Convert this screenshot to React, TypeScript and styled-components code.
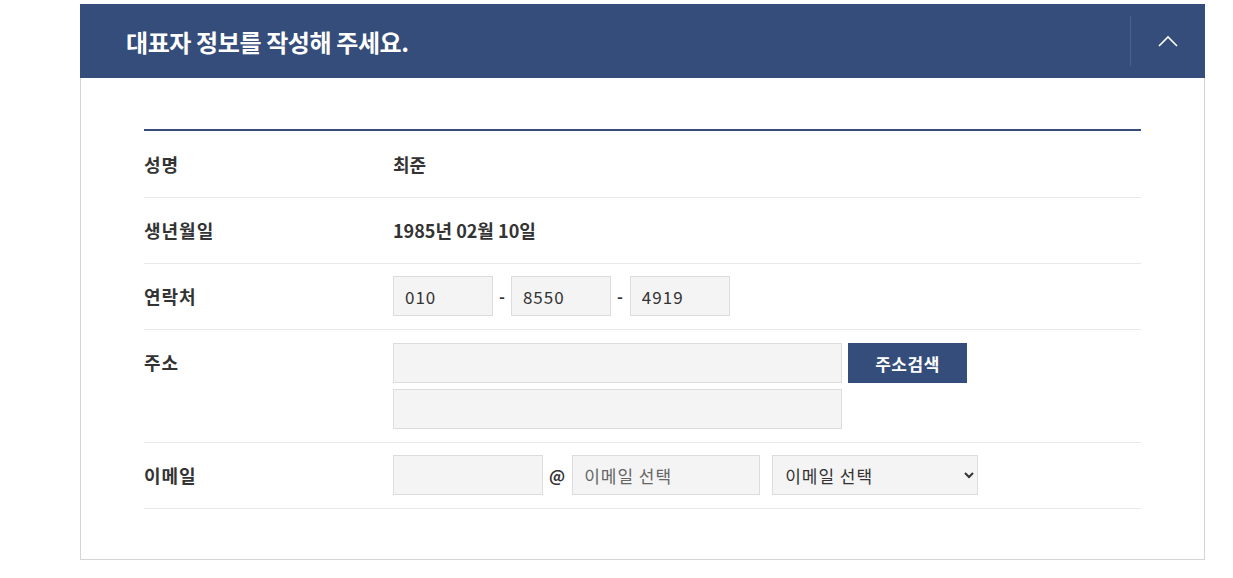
import styled, { createGlobalStyle } from 'styled-components';

const GlobalStyle = createGlobalStyle`
  body {
    margin: 0;
    background: #fff;
    font-family: "Noto Sans CJK KR", "Noto Sans", sans-serif;
    color: #333;
  }
`;

const Page = styled.div`
  padding: 4px 0 0 80px;
`;

const Panel = styled.section`
  width: 1125px;
`;

const Header = styled.div`
  display: flex;
  align-items: center;
  height: 74px;
  background: #344d7a;
  padding-left: 46px;
`;

const Title = styled.h2`
  flex: 1;
  margin: 0;
  color: #fff;
  font-size: 24px;
  font-weight: 700;
  letter-spacing: -0.4px;
`;

const ToggleButton = styled.button`
  display: flex;
  align-items: center;
  justify-content: center;
  width: 75px;
  height: 50px;
  border: 0;
  border-left: 1px solid #4a6190;
  background: transparent;
  cursor: pointer;
  padding: 0;
`;

const Body = styled.div`
  border: 1px solid #d4d4d4;
  border-top: 0;
  padding: 51px 63px 50px;
`;

const Table = styled.div`
  border-top: 2px solid #344d7a;
  padding-top: 1px;
`;

const Row = styled.div`
  display: grid;
  grid-template-columns: 249px 1fr;
  padding: 12px 0 13px;
  border-bottom: 1px solid #e9e9e9;
`;

const Label = styled.div`
  line-height: 40px;
  font-size: 18px;
  font-weight: 700;
  letter-spacing: 1px;
  color: #333;
`;

const Value = styled.div`
  line-height: 40px;
  font-size: 18px;
  font-weight: 700;
  color: #333;
`;

const Field = styled.div`
  display: flex;
  align-items: center;
  gap: 6px;
`;

const Stack = styled.div`
  display: flex;
  flex-direction: column;
  gap: 6px;
  padding-top: 1px;
`;

const Input = styled.input<{ $w: number }>`
  box-sizing: border-box;
  width: ${(p) => p.$w}px;
  height: 40px;
  padding: 0 11px;
  background: #f4f4f4;
  border: 1px solid #dcdcdc;
  font-family: "Noto Sans CJK KR", "Noto Sans", sans-serif;
  font-size: 17px;
  letter-spacing: 1px;
  color: #333;
  outline: none;
  &::placeholder {
    color: #666;
  }
`;

const Sep = styled.span<{ $gap?: number }>`
  font-size: 16px;
  font-weight: 700;
  color: #333;
  margin-right: ${(p) => p.$gap ?? 0}px;
`;

const SearchButton = styled.button`
  width: 119px;
  height: 40px;
  border: 0;
  background: #344d7a;
  color: #fff;
  font-family: "Noto Sans CJK KR", "Noto Sans", sans-serif;
  font-size: 17px;
  font-weight: 700;
  letter-spacing: 0.5px;
  cursor: pointer;
`;

const Select = styled.select`
  box-sizing: border-box;
  width: 206px;
  height: 40px;
  margin-left: 6px;
  padding: 0 8px;
  background: #f4f4f4;
  border: 1px solid #dcdcdc;
  border-radius: 0;
  font-family: "Noto Sans CJK KR", "Noto Sans", sans-serif;
  font-size: 17px;
  letter-spacing: 1px;
  color: #333;
`;

function App() {
  return (
    <Page>
      <GlobalStyle />
      <Panel>
        <Header>
          <Title>대표자 정보를 작성해 주세요.</Title>
          <ToggleButton aria-label="접기">
            <svg width="20" height="12" viewBox="0 0 20 12" fill="none">
              <polyline points="1,11 10,2 19,11" stroke="#fff" strokeWidth="1.6" />
            </svg>
          </ToggleButton>
        </Header>
        <Body>
          <Table>
            <Row>
              <Label>성명</Label>
              <Value>최준</Value>
            </Row>
            <Row>
              <Label>생년월일</Label>
              <Value>1985년 02월 10일</Value>
            </Row>
            <Row>
              <Label>연락처</Label>
              <Field>
                <Input $w={100} defaultValue="010" />
                <Sep>-</Sep>
                <Input $w={100} defaultValue="8550" />
                <Sep $gap={1}>-</Sep>
                <Input $w={100} defaultValue="4919" />
              </Field>
            </Row>
            <Row>
              <Label>주소</Label>
              <Stack>
                <Field>
                  <Input $w={449} />
                  <SearchButton>주소검색</SearchButton>
                </Field>
                <Field>
                  <Input $w={449} />
                </Field>
              </Stack>
            </Row>
            <Row>
              <Label>이메일</Label>
              <Field>
                <Input $w={150} />
                <Sep $gap={1}>@</Sep>
                <Input $w={188} placeholder="이메일 선택" />
                <Select defaultValue="">
                  <option value="">이메일 선택</option>
                  <option value="naver.com">naver.com</option>
                  <option value="gmail.com">gmail.com</option>
                  <option value="daum.net">daum.net</option>
                </Select>
              </Field>
            </Row>
          </Table>
        </Body>
      </Panel>
    </Page>
  );
}

export default App;
